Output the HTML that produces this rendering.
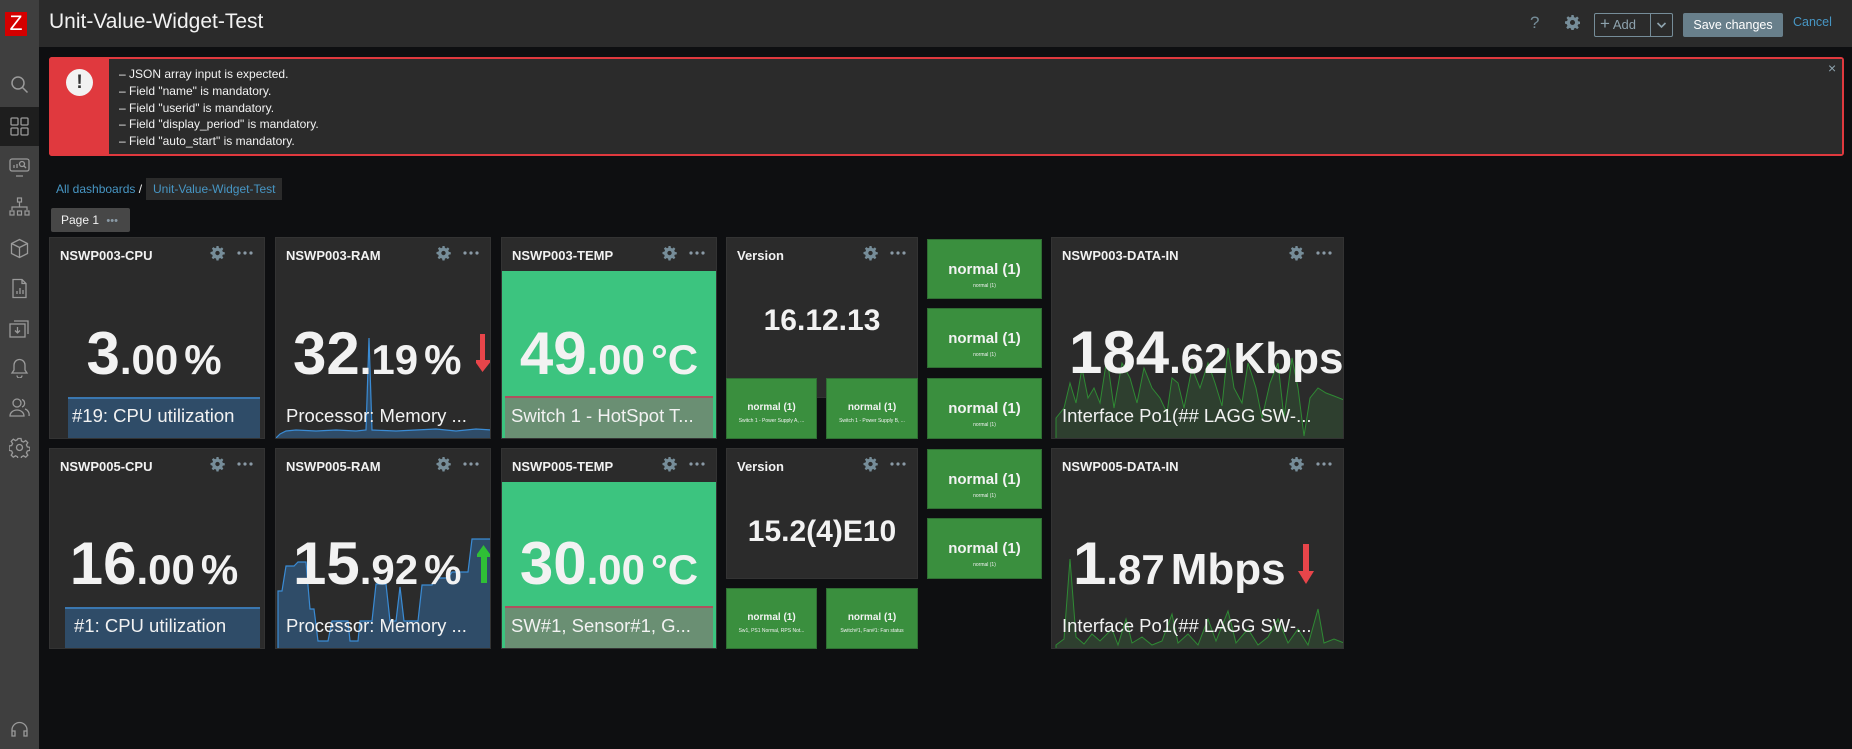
<!DOCTYPE html>
<html><head><meta charset="utf-8"><style>
*{box-sizing:border-box;margin:0;padding:0}
body{width:1852px;height:749px;background:#0e0f11;font-family:"Liberation Sans",Arial,sans-serif;position:relative;overflow:hidden;color:#f2f2f2}
.a{position:absolute}
.side{left:0;top:0;width:39px;height:749px;background:#3f3f3f}
.hdr{left:39px;top:0;width:1813px;height:47px;background:#2b2b2b}
.w{position:absolute;background:#2b2b2b;border:1px solid #333;overflow:hidden}
.wt{position:absolute;left:10px;top:10px;font-size:13px;font-weight:bold;color:#f2f2f2}
.ic{position:absolute;top:7px;right:10px;width:44px;height:16px}
.val{position:absolute;left:0;right:0;display:flex;justify-content:center;align-items:baseline;font-weight:bold;white-space:nowrap;color:#f2f2f2}
.b1{font-size:60px}.b2{font-size:42px}.b3{font-size:42px;margin-left:6px}
.desc{position:absolute;font-size:18.5px;white-space:nowrap;color:#f2f2f2}
.g{position:absolute;background:#3a8f3e;border:1px solid #2f6e33;text-align:center;color:#f2f2f2}
.g b{display:block;font-size:15px}
.g i{display:block;font-style:normal;font-size:5px;margin-top:5px}
.gs b{font-size:10px}
.gs i{font-size:5px}
.sic{position:absolute;left:9px;width:21px;height:21px}
</style></head><body>
<svg width="0" height="0" style="position:absolute"><defs><g id="icn"><path transform="translate(0.5 1) scale(0.875)" fill="#768d99" d="M6.8 0h2.4l.4 2.2 1.5.7 1.9-1.3 1.7 1.7-1.3 1.9.7 1.5 2.2.4v2.4l-2.2.4-.7 1.5 1.3 1.9-1.7 1.7-1.9-1.3-1.5.7-.4 2.2H6.8l-.4-2.2-1.5-.7-1.9 1.3-1.7-1.7 1.3-1.9-.7-1.5L0 9.2V6.8l2.2-.4.7-1.5-1.3-1.9 1.7-1.7 1.9 1.3 1.5-.7zM8 5.5a2.5 2.5 0 1 0 0 5 2.5 2.5 0 1 0 0-5z"/><circle cx="29" cy="8" r="1.6" fill="#8a9aa6"/><circle cx="35" cy="8" r="1.6" fill="#8a9aa6"/><circle cx="41" cy="8" r="1.6" fill="#8a9aa6"/></g></defs></svg>
<div class="a side"></div>
<div class="a" style="left:0;top:107px;width:39px;height:39px;background:#1e1e1e"></div>
<div class="a" style="left:5px;top:12px;width:22px;height:24px;background:#d40000;color:#fff;font-size:21px;text-align:center;line-height:24px">Z</div>
<svg class="sic" style="top:74px" viewBox="0 0 21 21" fill="none" stroke="#9a9a9a" stroke-width="1.5"><circle cx="9" cy="9" r="6"/><path d="M13.5 13.5l5 5"/></svg>
<svg class="sic" style="top:116px" viewBox="0 0 21 21" fill="none" stroke="#9a9a9a" stroke-width="1.3"><rect x="2" y="2" width="7" height="7" rx="1"/><rect x="12" y="2" width="7" height="7" rx="1"/><rect x="2" y="12" width="7" height="7" rx="1"/><rect x="12" y="12" width="7" height="7" rx="1"/></svg>
<svg class="sic" style="top:156px" viewBox="0 0 21 21" fill="none" stroke="#9a9a9a" stroke-width="1.3"><rect x="1" y="3" width="19" height="12" rx="2"/><path d="M7 20h7M5 12V9M8 12V8"/><circle cx="13" cy="8" r="2.5"/><path d="M15 10l2 2"/></svg>
<svg class="sic" style="top:197px" viewBox="0 0 21 21" fill="none" stroke="#9a9a9a" stroke-width="1.2"><rect x="8.5" y="1" width="4" height="4"/><path d="M10.5 5v5M3 13v-3h15v3"/><rect x="1" y="14" width="4" height="4"/><rect x="8.5" y="14" width="4" height="4"/><rect x="16" y="14" width="4" height="4"/></svg>
<svg class="sic" style="top:238px" viewBox="0 0 21 21" fill="none" stroke="#9a9a9a" stroke-width="1.3"><path d="M10.5 1.5l8 4v10l-8 4-8-4v-10z M2.5 5.5l8 4 8-4M10.5 9.5v10"/></svg>
<svg class="sic" style="top:278px" viewBox="0 0 21 21" fill="none" stroke="#9a9a9a" stroke-width="1.3"><path d="M4 1.5h9l4 4v14H4z M13 1.5v4h4 M8 16v-3M11 16v-6M14 16v-4"/></svg>
<svg class="sic" style="top:318px" viewBox="0 0 21 21" fill="none" stroke="#9a9a9a" stroke-width="1.3"><rect x="1" y="6" width="15" height="13"/><path d="M5 3h14v13 M8.5 9v6M6 12.5l2.5 2.5 2.5-2.5"/></svg>
<svg class="sic" style="top:357px" viewBox="0 0 21 21" fill="none" stroke="#9a9a9a" stroke-width="1.3"><path d="M3 16h15l-2-3V8a5.5 5.5 0 0 0-11 0v5z M8 18.5a2.5 2.5 0 0 0 5 0"/></svg>
<svg class="sic" style="top:397px" viewBox="0 0 21 21" fill="none" stroke="#9a9a9a" stroke-width="1.3"><circle cx="8" cy="6" r="4"/><path d="M1 19a7 6 0 0 1 14 0z M13 2.5a4 4 0 0 1 0 7.5 M16 12a6 6 0 0 1 4 7"/></svg>
<svg class="sic" style="top:437px" viewBox="0 0 21 21" fill="none" stroke="#9a9a9a" stroke-width="1.3"><circle cx="10.5" cy="10.5" r="3"/><path d="M9 1.5h3l.5 2.5 2 1 2.2-1.4 2.1 2.1-1.4 2.2 1 2 2.5.5v3l-2.5.5-1 2 1.4 2.2-2.1 2.1-2.2-1.4-2 1-.5 2.5H9l-.5-2.5-2-1-2.2 1.4-2.1-2.1 1.4-2.2-1-2-2.5-.5V9l2.5-.5 1-2-1.4-2.2 2.1-2.1 2.2 1.4 2-1z"/></svg>
<svg class="sic" style="top:720px" viewBox="0 0 21 21" fill="none" stroke="#9a9a9a" stroke-width="1.3"><path d="M3 13v-3a7.5 7.5 0 0 1 15 0v3 M3 11h3v5H3z M15 11h3v5h-3z"/></svg>

<div class="a hdr"></div>
<div class="a" style="left:49px;top:10px;font-size:21px;color:#f2f2f2">Unit-Value-Widget-Test</div>
<div class="a" style="left:1530px;top:13px;font-size:17px;color:#768d99">?</div>
<svg class="a" style="left:1565px;top:15px" width="15" height="15" viewBox="0 0 16 16"><path fill="#768d99" d="M6.8 0h2.4l.4 2.2 1.5.7 1.9-1.3 1.7 1.7-1.3 1.9.7 1.5 2.2.4v2.4l-2.2.4-.7 1.5 1.3 1.9-1.7 1.7-1.9-1.3-1.5.7-.4 2.2H6.8l-.4-2.2-1.5-.7-1.9 1.3-1.7-1.7 1.3-1.9-.7-1.5L0 9.2V6.8l2.2-.4.7-1.5-1.3-1.9 1.7-1.7 1.9 1.3 1.5-.7zM8 5.3a2.7 2.7 0 1 0 0 5.4 2.7 2.7 0 1 0 0-5.4z"/></svg>
<div class="a" style="left:1594px;top:13px;width:79px;height:24px;border:1px solid #768d99;border-radius:2px"></div>
<div class="a" style="left:1650px;top:13px;width:1px;height:24px;background:#768d99"></div>
<div class="a" style="left:1600px;top:15px;font-size:13px;color:#8ea3ae;line-height:18px"><span style="font-size:17px">+</span> Add</div>
<svg class="a" style="left:1656px;top:21px" width="11" height="8" viewBox="0 0 11 8"><path d="M1.5 2l4 4 4-4" stroke="#8ea3ae" stroke-width="1.6" fill="none"/></svg>
<div class="a" style="left:1683px;top:13px;width:100px;height:24px;background:#687f8b;border-radius:2px;font-size:12.5px;color:#fff;text-align:center;line-height:24px">Save changes</div>
<div class="a" style="left:1793px;top:15px;font-size:12.5px;color:#4796c4">Cancel</div>

<div class="a" style="left:49px;top:57px;width:1795px;height:99px;border:2px solid #e0393e;border-radius:3px;background-color:#2b2b2b"></div>
<div class="a" style="left:51px;top:59px;width:1791px;height:95px;background-color:#2b2b2b"></div>
<div class="a" style="left:49px;top:57px;width:60px;height:99px;background:#e0393e;border-radius:3px 0 0 3px"></div>
<div class="a" style="left:66px;top:69px;width:27px;height:27px;border-radius:50%;background:#f2f2f2;color:#333;font-weight:bold;font-size:19px;text-align:center;line-height:27px">!</div>
<div class="a" style="left:119px;top:66px;font-size:12px;line-height:16.8px;color:#f2f2f2">
– JSON array input is expected.<br>– Field "name" is mandatory.<br>– Field "userid" is mandatory.<br>– Field "display_period" is mandatory.<br>– Field "auto_start" is mandatory.</div>
<div class="a" style="left:1828px;top:60px;font-size:14px;color:#8ea3ae">×</div>

<div class="a" style="left:56px;top:182px;font-size:12px;color:#4796c4">All dashboards <span style="color:#f2f2f2">/</span></div>
<div class="a" style="left:146px;top:178px;width:136px;height:22px;background:#2b2b2b;font-size:12px;color:#4796c4;line-height:22px;padding-left:7px">Unit-Value-Widget-Test</div>
<div class="a" style="left:51px;top:208px;width:79px;height:24px;background:#474747;border-radius:2px;font-size:12px;line-height:24px;padding-left:10px;color:#f2f2f2">Page 1 <span style="color:#8a9aa6;font-size:11px;margin-left:4px">•••</span></div>

<!-- Row 1 -->
<div class="w" style="left:49px;top:237px;width:216px;height:202px">
 <div class="wt">NSWP003-CPU</div>
 <svg class="ic" viewBox="0 0 44 16"><use href="#icn"/></svg>
 <div class="val" style="top:81px;padding-right:6px"><span class="b1">3</span><span class="b2">.00</span><span class="b3">%</span></div>
 <div class="a" style="left:18px;top:159px;width:192px;height:43px;background:#2f4c68;border-top:2px solid #3a77b0"></div>
 <div class="desc" style="left:22px;top:167px">#19: CPU utilization</div>
</div>
<div class="w" style="left:275px;top:237px;width:216px;height:202px">
 <div class="wt">NSWP003-RAM</div>
 <svg class="ic" viewBox="0 0 44 16"><use href="#icn"/></svg>
 <svg class="a" style="left:0;top:60px" width="216" height="142" viewBox="0 0 216 142" preserveAspectRatio="none"><path d="M0 140 L4 136 L10 133 L20 132 L40 133 L60 132 L80 133 L90 132 L93 40 L96 132 L120 133 L140 132 L160 131 L180 133 L200 131 L216 132 L216 142 L0 142Z" fill="#2f4c68" stroke="#3a8bd4" stroke-width="1.2"/></svg>
 <div class="val" style="top:81px;justify-content:flex-start;left:17px"><span class="b1">32</span><span class="b2">.19</span><span class="b3">%</span></div>
 <svg class="a" style="left:200px;top:96px" width="16" height="38" viewBox="0 0 16 38"><path d="M4 0h5v26h7L6.5 38 -2 26h6z" fill="#e8454a"/></svg>
 <div class="desc" style="left:10px;top:167px">Processor: Memory ...</div>
</div>
<div class="w" style="left:501px;top:237px;width:216px;height:202px">
 <div class="wt">NSWP003-TEMP</div>
 <svg class="ic" viewBox="0 0 44 16"><use href="#icn"/></svg>
 <div class="a" style="left:0;top:33px;width:216px;height:169px;background:#3cc47f"></div>
 <div class="val" style="top:81px"><span class="b1">49</span><span class="b2">.00</span><span class="b3">°C</span></div>
 <div class="a" style="left:3px;top:158px;width:208px;height:44px;background:#6a8f73;border-top:2px solid #b0505e"></div>
 <div class="desc" style="left:9px;top:167px">Switch 1 - HotSpot T...</div>
</div>
<div class="w" style="left:726px;top:237px;width:192px;height:161px">
 <div class="wt">Version</div>
 <svg class="ic" viewBox="0 0 44 16"><use href="#icn"/></svg>
 <div class="val" style="top:66px;font-size:30px">16.12.13</div>
</div>
<div class="g gs" style="left:726px;top:378px;width:91px;height:61px;padding-top:23px"><b>normal (1)</b><i>Switch 1 - Power Supply A, ...</i></div>
<div class="g gs" style="left:826px;top:378px;width:92px;height:61px;padding-top:23px"><b>normal (1)</b><i>Switch 1 - Power Supply B, ...</i></div>
<div class="g" style="left:927px;top:239px;width:115px;height:60px;padding-top:21px"><b>normal (1)</b><i>normal (1)</i></div>
<div class="g" style="left:927px;top:308px;width:115px;height:60px;padding-top:21px"><b>normal (1)</b><i>normal (1)</i></div>
<div class="g" style="left:927px;top:378px;width:115px;height:61px;padding-top:21px"><b>normal (1)</b><i>normal (1)</i></div>
<div class="w" style="left:1051px;top:237px;width:293px;height:202px">
 <div class="wt">NSWP003-DATA-IN</div>
 <svg class="ic" viewBox="0 0 44 16"><use href="#icn"/></svg>
 <svg class="a" style="left:0;top:70px" width="293" height="132" viewBox="0 0 293 132" preserveAspectRatio="none"><path d="M4 110 L12 100 L18 75 L24 95 L30 60 L36 90 L42 80 L48 95 L55 50 L62 100 L70 55 L78 70 L85 95 L92 60 L100 80 L108 90 L115 105 L120 70 L126 75 L132 100 L140 60 L148 80 L156 55 L163 75 L170 98 L176 40 L182 80 L190 95 L196 55 L204 80 L210 110 L218 75 L226 55 L232 110 L240 50 L246 80 L252 128 L258 90 L266 80 L274 85 L282 88 L292 92 L292 132 L4 132Z" fill="#2e3f2f" stroke="#2f8a34" stroke-width="1"/></svg>
 <div class="val" style="top:80px;justify-content:flex-start;left:17px"><span class="b1">184</span><span class="b2">.62</span><span class="b3" style="font-size:44px">Kbps</span></div>
 <div class="desc" style="left:10px;top:167px">Interface Po1(## LAGG SW-...</div>
</div>

<!-- Row 2 -->
<div class="w" style="left:49px;top:448px;width:216px;height:201px">
 <div class="wt">NSWP005-CPU</div>
 <svg class="ic" viewBox="0 0 44 16"><use href="#icn"/></svg>
 <div class="val" style="top:80px;padding-right:6px"><span class="b1">16</span><span class="b2">.00</span><span class="b3">%</span></div>
 <div class="a" style="left:15px;top:158px;width:195px;height:43px;background:#2f4c68;border-top:2px solid #3a77b0"></div>
 <div class="desc" style="left:24px;top:166px">#1: CPU utilization</div>
</div>
<div class="w" style="left:275px;top:448px;width:216px;height:201px">
 <div class="wt">NSWP005-RAM</div>
 <svg class="ic" viewBox="0 0 44 16"><use href="#icn"/></svg>
 <svg class="a" style="left:0;top:60px" width="216" height="141" viewBox="0 0 216 141" preserveAspectRatio="none"><path d="M2 82 L6 82 L10 57 L18 57 L22 53 L30 53 L34 100 L38 100 L42 132 L52 132 L56 112 L72 112 L74 132 L82 132 L84 112 L96 112 L100 75 L110 75 L114 112 L120 112 L124 78 L128 112 L142 112 L146 76 L156 76 L160 69 L172 69 L176 63 L192 63 L196 30 L216 30 L216 141 L2 141Z" fill="#2f4c68" stroke="#3a8bd4" stroke-width="1.2"/></svg>
 <div class="val" style="top:80px;justify-content:flex-start;left:17px"><span class="b1">15</span><span class="b2">.92</span><span class="b3">%</span></div>
 <svg class="a" style="left:201px;top:96px" width="15" height="38" viewBox="0 0 15 38"><path d="M6.5 0L15 12h-5v26H4V12h-6z" fill="#2fbf36"/></svg>
 <div class="desc" style="left:10px;top:166px">Processor: Memory ...</div>
</div>
<div class="w" style="left:501px;top:448px;width:216px;height:201px">
 <div class="wt">NSWP005-TEMP</div>
 <svg class="ic" viewBox="0 0 44 16"><use href="#icn"/></svg>
 <div class="a" style="left:0;top:33px;width:216px;height:168px;background:#3cc47f"></div>
 <div class="val" style="top:80px"><span class="b1">30</span><span class="b2">.00</span><span class="b3">°C</span></div>
 <div class="a" style="left:3px;top:157px;width:208px;height:44px;background:#6a8f73;border-top:2px solid #b0505e"></div>
 <div class="desc" style="left:9px;top:166px">SW#1, Sensor#1, G...</div>
</div>
<div class="w" style="left:726px;top:448px;width:192px;height:131px">
 <div class="wt">Version</div>
 <svg class="ic" viewBox="0 0 44 16"><use href="#icn"/></svg>
 <div class="val" style="top:66px;font-size:30px">15.2(4)E10</div>
</div>
<div class="g gs" style="left:726px;top:588px;width:91px;height:61px;padding-top:23px"><b>normal (1)</b><i>Sw1, PS1 Normal, RPS Not...</i></div>
<div class="g gs" style="left:826px;top:588px;width:92px;height:61px;padding-top:23px"><b>normal (1)</b><i>Switch#1, Fan#1: Fan status</i></div>
<div class="g" style="left:927px;top:449px;width:115px;height:60px;padding-top:21px"><b>normal (1)</b><i>normal (1)</i></div>
<div class="g" style="left:927px;top:518px;width:115px;height:61px;padding-top:21px"><b>normal (1)</b><i>normal (1)</i></div>
<div class="w" style="left:1051px;top:448px;width:293px;height:201px">
 <div class="wt">NSWP005-DATA-IN</div>
 <svg class="ic" viewBox="0 0 44 16"><use href="#icn"/></svg>
 <svg class="a" style="left:0;top:70px" width="293" height="131" viewBox="0 0 293 131" preserveAspectRatio="none"><path d="M4 126 L12 120 L18 40 L24 118 L32 125 L40 115 L48 122 L60 110 L66 126 L74 100 L80 124 L90 118 L100 126 L110 122 L120 95 L126 124 L136 115 L146 126 L156 100 L164 122 L176 92 L184 124 L196 110 L206 126 L216 118 L226 100 L236 124 L246 110 L256 126 L266 90 L272 124 L282 120 L292 124 L292 131 L4 131Z" fill="#2e3f2f" stroke="#2f8a34" stroke-width="1"/></svg>
 <div class="val" style="top:80px;justify-content:flex-start;left:21px"><span class="b1">1</span><span class="b2">.87</span><span class="b3" style="font-size:44px">Mbps</span><svg style="margin-left:12px;align-self:center" width="16" height="40" viewBox="0 0 16 40"><path d="M5 0h6v27h5L8 40 0 27h5z" fill="#e8454a"/></svg></div>
 <div class="desc" style="left:10px;top:166px">Interface Po1(## LAGG SW-...</div>
</div>
</body></html>
